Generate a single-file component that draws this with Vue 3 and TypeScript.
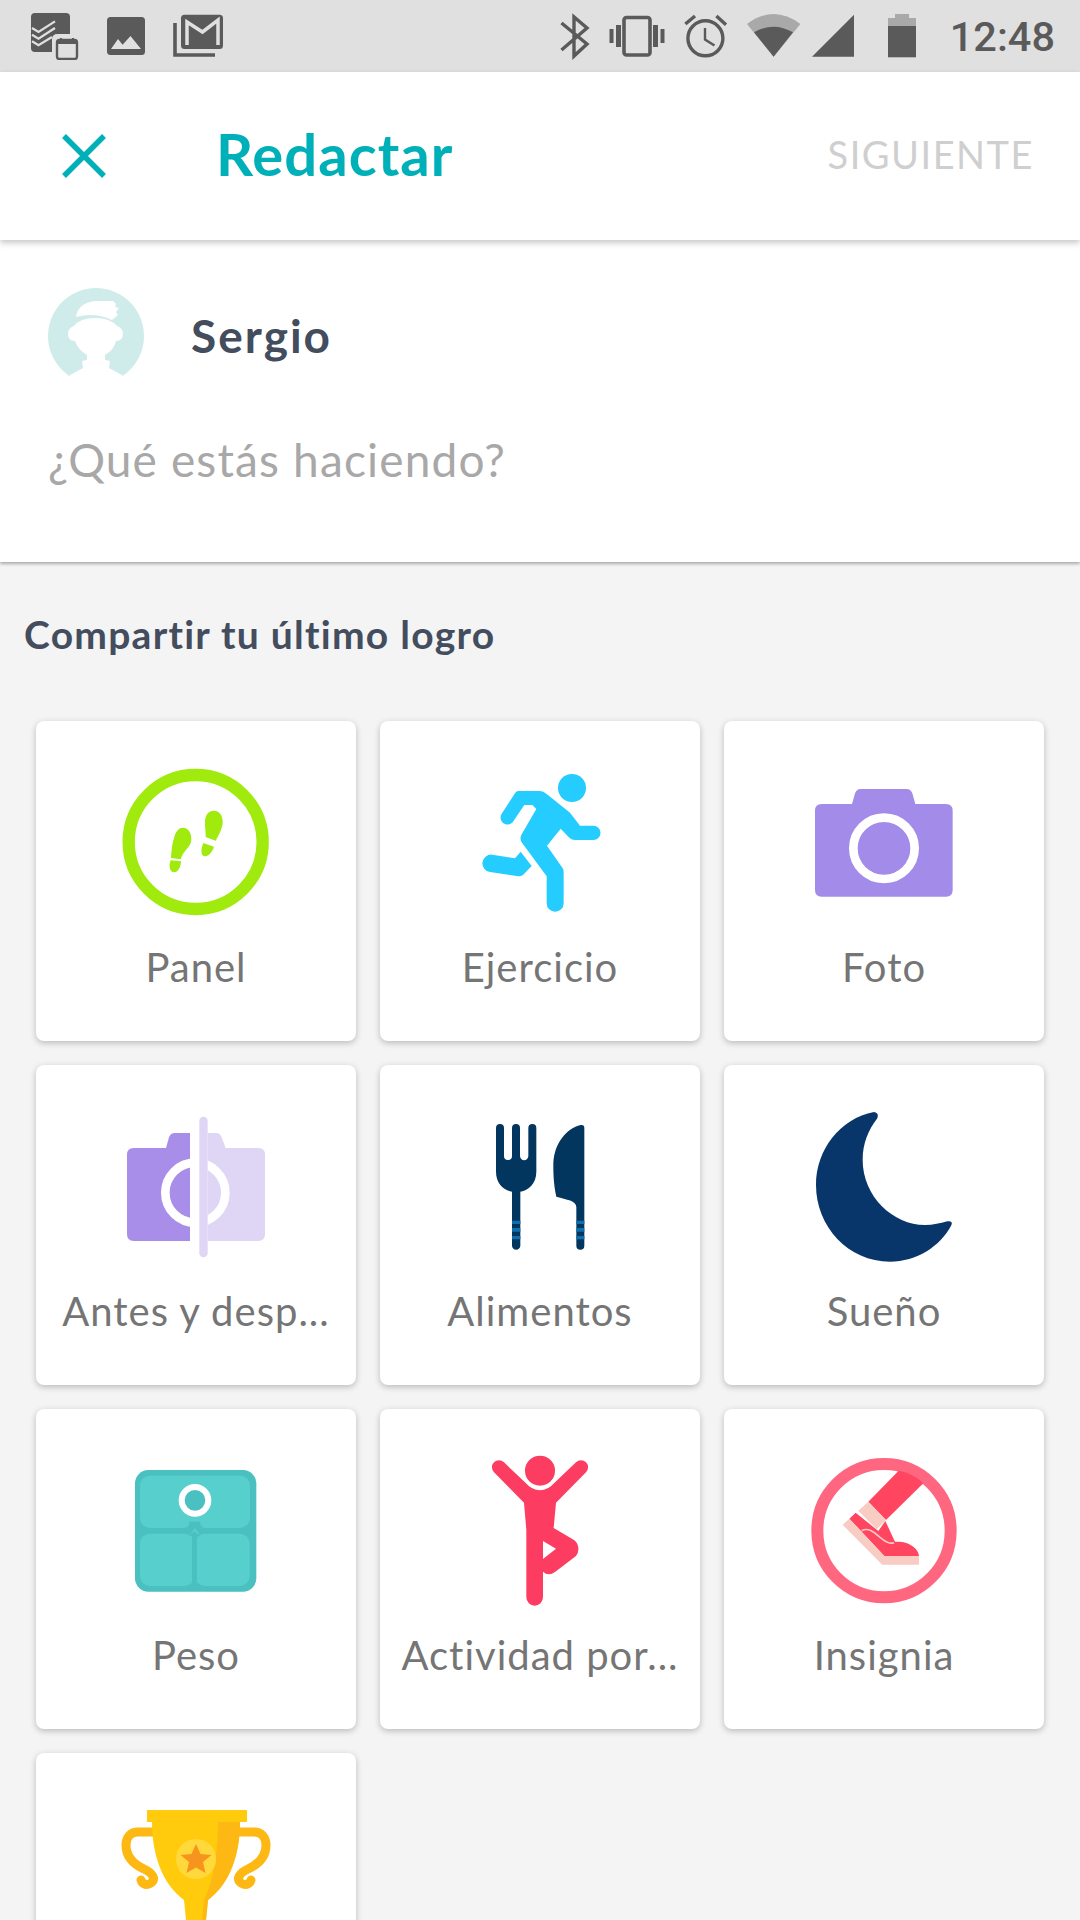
<template>
  <div class="screen">
    <!-- Status bar -->
    <div class="status-bar">
      <div class="status-group left">
        <svg class="st" width="50" height="48" viewBox="30 12 50 48">
          <rect x="31" y="13" width="39" height="39" rx="4" fill="#5a5a5a" />
          <path d="M32 28l6.500 4L55 21.300M32 34.700l6.500 4L55 28M32 41.300l6.500 4L52 37" fill="none" stroke="#e0e0e0" stroke-width="2.200" />
          <rect x="52" y="34" width="28" height="28" rx="5" fill="#e0e0e0" />
          <rect x="57" y="40" width="20" height="19" rx="2.500" fill="#e0e0e0" stroke="#5a5a5a" stroke-width="2.400" />
          <path d="M57 41h20v3H57z" fill="#5a5a5a" />
          <path d="M61 38v3M73 38v3" stroke="#5a5a5a" stroke-width="2" />
        </svg>
        <svg class="st" width="42" height="48" viewBox="105 12 42 48">
          <rect x="107" y="17" width="38" height="38" rx="3.500" fill="#5a5a5a" />
          <path d="M111 49l7-10 4.600 5.700 7.900-8.700L141 49z" fill="#e0e0e0" />
        </svg>
        <svg class="st" width="52" height="48" viewBox="172 12 52 48">
          <path d="M175 23v32h40" fill="none" stroke="#5a5a5a" stroke-width="3.600" />
          <rect x="181" y="14.700" width="42" height="34.300" rx="3.500" fill="#5a5a5a" />
          <path d="M187 45V22l15.500 10L218 20v25" fill="none" stroke="#e0e0e0" stroke-width="3.500" />
        </svg>
      </div>
      <div class="status-group right">
        <svg class="st" width="38" height="48" viewBox="559 12 38 48">
          <path d="M563.500 23L589 44l-13 12V17l13 11-25.500 22" fill="none" stroke="#5a5a5a" stroke-width="3.400" />
        </svg>
        <svg class="st" width="68" height="48" viewBox="605 12 68 48">
          <rect x="626" y="17.500" width="26" height="37.500" rx="2.500" fill="none" stroke="#5a5a5a" stroke-width="3.600" />
          <path d="M618 25h5v22h-5zM655 25h5v22h-5zM611.500 29h4v14h-4zM662.500 29h4v14h-4z" fill="#5a5a5a" />
        </svg>
        <svg class="st" width="54" height="48" viewBox="681 12 54 48">
          <circle cx="707.400" cy="38.300" r="17.500" fill="none" stroke="#5a5a5a" stroke-width="3.400" />
          <path d="M707 28v11.500l9.500 6" fill="none" stroke="#5a5a5a" stroke-width="2.400" />
          <path d="M687.400 24l9.600-8M718.400 16l9.600 8.700" stroke="#5a5a5a" stroke-width="3.400" />
        </svg>
        <svg class="st" width="63" height="48" viewBox="743 12 63 48">
          <path d="M775.600 56.700L749 24q26.600-20 53.400 0z" fill="#a9a9a9" />
          <path d="M775.600 56.700L756 32.300q19.600-11.300 39 0z" fill="#5a5a5a" />
        </svg>
        <svg class="st" width="44" height="48" viewBox="814 12 44 48">
          <path d="M814 56.700l42-42v42z" fill="#5a5a5a" />
        </svg>
        <svg class="st batt" width="44" height="48" viewBox="882 12 44 48">
          <path d="M897 14h14v4h7v8h-28v-8h7z" fill="#a9a9a9" />
          <rect x="890" y="26" width="28" height="31.300" fill="#5a5a5a" />
        </svg>
        <span class="clock">12:48</span>
      </div>
    </div>

    <!-- Toolbar -->
    <header class="toolbar">
      <svg class="close" width="44" height="44" viewBox="0 0 44 44">
        <path d="M2 2l40 40M42 2L2 42" fill="none" stroke="#00b0b9" stroke-width="5.500" />
      </svg>
      <h1 class="title">Redactar</h1>
      <span class="next">SIGUIENTE</span>
    </header>

    <!-- Composer -->
    <section class="composer">
      <div class="user">
        <svg class="avatar" width="96" height="96" viewBox="48 288 96 96">
          <circle cx="96" cy="336" r="48" fill="#d0ecea" />
          <path d="M76 317q2-14 19-16h18l3 3-1 3 4 1-3 4 2 3-6 5q-17-8-36-3z" fill="#fff" />
          <path d="M95 318q15 0 22 8 6 2 6 8 0 7-7 7-2 9-11 14v5l5 1-1 7 13 7 6 9H64l6-9 13-7-1-7 5-1v-5q-9-5-12-14-7 0-7-7 0-6 6-8 6-8 21-8z" fill="#fff" />
        </svg>
        <span class="name">Sergio</span>
      </div>
      <div class="placeholder">¿Qué estás haciendo?</div>
    </section>

    <!-- Share grid -->
    <section class="share">
      <h2 class="share-title">Compartir tu último logro</h2>
      <div class="grid">
        <div class="card">
          <svg class="icon" viewBox="258 141 480 480">
            <circle cx="497" cy="381" r="201" fill="none" stroke="#a0ea0e" stroke-width="37" />
            <path d="M552 287c18 0 28 18 26 38-2 20-13 37-21 52l-30-11c1-16-3-31-2-46 1-20 10-33 27-33zM520 384l32 11c-4 15-17 29-27 29-11 0-15-16-5-40zM459 338c17 0 26 17 25 37-2 23-24 30-32 58l-29-4c2-29 4-44 10-64 5-17 14-27 26-27zM422 436l31 3c-1 19-9 33-21 33s-17-17-10-36z" fill="#a0ea0e" />
          </svg>
          <span class="label">Panel</span>
        </div>
        <div class="card">
          <svg class="icon" viewBox="255 141 480 480">
            <circle cx="591" cy="219" r="42" fill="#25ccff" />
            <path d="M430 228h65q10 0 20 9l70 56 30 39h40a21 21 0 0 1 0 43h-55q-10 0-17-7l-26-27-41 51 46 66q4 5 4 12v95a25.500 25.500 0 0 1-51 0v-81l-73-99q-10-13-2-27l44-76-12-12h-24l-35 52a21 21 0 0 1-34-24l39-60q5-10 12-10z" fill="#25ccff" />
            <path d="M352 419l68 11 17-20 33 43-23 24q-7 8-17 7l-85-13a26 26 0 0 1 7-52z" fill="#25ccff" />
          </svg>
          <span class="label">Ejercicio</span>
        </div>
        <div class="card">
          <svg class="icon" viewBox="252 141 480 480">
            <path d="M396 267l9-32q5-13 17-13h138q12 0 17 13l9 32h92q20 0 20 20v238q0 20-20 20H305q-20 0-20-20V287q0-20 20-20z" fill="#a38ce9" />
            <circle cx="492" cy="400" r="92" fill="none" stroke="#fff" stroke-width="26" />
          </svg>
          <span class="label">Foto</span>
        </div>
        <div class="card">
          <svg class="icon" viewBox="48 18 480 480">
            <path d="M198 144l9-32q5-13 17-13h46v324H101q-20 0-20-20V164q0-20 20-20z" fill="#a88ee9" />
            <path d="M323 99h25q12 0 17 13l12 32h98q20 0 20 20v239q0 20-20 20H323z" fill="#dfd6f6" />
            <circle cx="286" cy="278" r="90" fill="none" stroke="#fff" stroke-width="26" />
            <path d="M271 90h27v340h-27z" fill="#fff" />
            <rect x="298" y="50" width="25" height="422" rx="12.500" fill="#dfd6f6" />
          </svg>
          <span class="label">Antes y desp...</span>
        </div>
        <div class="card">
          <svg class="icon" viewBox="30 18 480 480">
            <path d="M138 84a12 12 0 0 1 24 0v84a12 12 0 0 0 24 0V84a12 12 0 0 1 24 0v84a12.500 12.500 0 0 0 25 0V84a12 12 0 0 1 24 0v131c0 35-24 57-48 60v162a12.500 12.500 0 0 1-25 0V275c-26-5-48-25-48-60z" fill="#03365f" />
            <path d="M403 84v353a12 12 0 0 1-24 0V322c0-22-29-22-60-32-9-40-9-75-9-100 2-60 40-105 82-115q11-2 11 9z" fill="#03365f" />
            <path d="M186 362h25v10h-25zM186 384h25v11h-25zM186 408h25v10h-25zM379 362h24v10h-24zM379 384h24v11h-24zM379 408h24v10h-24z" fill="#0d6fae" />
          </svg>
          <span class="label">Alimentos</span>
        </div>
        <div class="card">
          <svg class="icon" viewBox="42 18 480 480">
            <path d="M252 36q16 2 10 19c-27 35-44 75-44 125 0 110 92 195 187 195 25 0 45-5 67-11q18-2 12 12c-34 64-104 109-184 109-125 0-222-105-222-230 0-105 72-200 174-219z" fill="#08366b" />
          </svg>
          <span class="label">Sueño</span>
        </div>
        <div class="card">
          <svg class="icon" viewBox="48 30 480 480">
            <rect x="105" y="90" width="364" height="365" rx="40" fill="#4bc0c0" />
            <rect x="120" y="107" width="330" height="157" rx="30" fill="#56cfcd" />
            <path d="M268 245q0 18-18 20v16h68v-16q-18-2-18-20z" fill="#4bc0c0" />
            <rect x="120" y="281" width="164" height="157" rx="30" fill="#56cfcd" />
            <rect x="285" y="281" width="164" height="157" rx="30" fill="#56cfcd" />
            <path d="M272 282l13-19 13 19z" fill="#56cfcd" />
            <path d="M276 438V284q0-9 7.500-9t7.500 9v154z" fill="#4bc0c0" />
            <circle cx="285" cy="181" r="40" fill="#4bc0c0" stroke="#fff" stroke-width="18" />
          </svg>
          <span class="label">Peso</span>
        </div>
        <div class="card">
          <svg class="icon" viewBox="30 30 480 480">
            <circle cx="270" cy="92" r="45" fill="#fd3c61" />
            <path fill-rule="evenodd" d="M162 67l66 63q17 20 42 21 25-1 42-21l66-63a21 21 0 0 1 30 30l-90 91-7 76 61 36a34 34 0 0 1 6 48l-62 47q-21 15-37 0v77a25 25 0 0 1-50 0V270l-7-82-90-91a21 21 0 0 1 30-30zM279 303v54l39-31z" fill="#fd3c61" />
          </svg>
          <span class="label">Actividad por...</span>
        </div>
        <div class="card">
          <svg class="icon" viewBox="42 30 480 480">
            <circle cx="282" cy="272" r="200" fill="none" stroke="#ff6680" stroke-width="36" />
            <path d="M235 185l91-93q44 8 74 38L288 240z" fill="#ff4560" />
            <path d="M235 185l53 55-28 28-55-56z" fill="#f8cbc3" />
            <path d="M178 236l19-18 68 55 21-30 29 62h15c30 3 55 20 57 43H283z" fill="#ff4560" />
            <path d="M158 254l20-18 105 112h104v26H277z" fill="#f8cbc3" />
            <path d="M215 272c20-10 35 3 55 20 20 16 30 20 42 16" fill="none" stroke="#f8cbc3" stroke-width="5" />
          </svg>
          <span class="label">Insignia</span>
        </div>
        <div class="card">
          <svg class="icon" viewBox="116 1794 160 160">
            <path d="M158 1832h-20c-8 0-12 6-12 13 0 11 7 19 18 24 9 4 12 10 7 14-4 3-9 1-10-3M234 1832h20c8 0 12 6 12 13 0 11-7 19-18 24-9 4-12 10-7 14 4 3 9 1 10-3" fill="none" stroke="#fdb813" stroke-width="9" stroke-linecap="round" />
            <path d="M147 1810h100v12h-7c0 32-10 62-32 78l-2 20h-20l-2-20c-22-16-32-46-32-78h-5z" fill="#ffcb0c" />
            <path d="M218 1822h22c0 32-10 62-32 78l-2 20h-4l2-20c10-20 14-50 14-78z" fill="#fdb813" />
            <circle cx="196" cy="1859" r="20" fill="#ffd93b" />
            <path d="M196 1844l4.500 10 11 1-8.500 7 2.500 11-9.500-5.500-9.500 5.500 2.500-11-8.500-7 11-1z" fill="#f7941d" />
          </svg>
        </div>
      </div>
    </section>
  </div>
</template>

<script setup lang="ts">
</script>

<style>
html,
body {
  margin: 0;
  background: #f4f4f4;
}
</style>

<style scoped>
.screen {
  width: 1080px;
  height: 1920px;
  overflow: hidden;
  background: #f4f4f4;
  font-family: Lato, "Open Sans", sans-serif;
}

.status-bar {
  height: 72px;
  background: #e0e0e0;
  display: flex;
  justify-content: space-between;
  align-items: center;
  padding: 0 25px 0 30px;
}

.status-group {
  display: flex;
  align-items: center;
}

.status-group.left {
  gap: 25px;
}

.status-group.right {
  gap: 8px;
}

.st {
  display: block;
}

.batt {
  margin: 0 18px 0 16px;
}

.clock {
  font-family: Roboto, sans-serif;
  font-weight: 500;
  font-size: 41.5px;
  color: #5a5a5a;
}

.toolbar {
  position: relative;
  z-index: 2;
  height: 168px;
  background: #fff;
  display: flex;
  align-items: center;
  padding: 0 46px 0 62px;
  box-shadow: 0 3px 6px rgba(0, 0, 0, 0.22);
}

.close {
  display: block;
}

.title {
  margin: 0 0 5px 110px;
  font-size: 58px;
  font-weight: 700;
  letter-spacing: 1px;
  color: #00b0b9;
}

.next {
  margin: 0 0 5px auto;
  font-size: 38px;
  letter-spacing: 1.5px;
  color: #cfcfcf;
}

.composer {
  position: relative;
  z-index: 1;
  height: 322px;
  box-sizing: border-box;
  background: #fff;
  padding: 48px 48px 0;
  box-shadow: 0 2px 3px rgba(0, 0, 0, 0.3);
}

.user {
  display: flex;
  align-items: center;
  gap: 47px;
}

.avatar {
  display: block;
}

.name {
  margin-bottom: 2px;
  font-size: 46px;
  font-weight: 700;
  letter-spacing: 2px;
  color: #434d5d;
}

.placeholder {
  margin-top: 48px;
  font-size: 46px;
  letter-spacing: 1.15px;
  color: #a8a8a8;
}

.share-title {
  margin: 0;
  padding: 49px 0 0 24px;
  font-size: 39px;
  font-weight: 700;
  letter-spacing: 1.25px;
  color: #434d5d;
}

.grid {
  display: grid;
  grid-template-columns: repeat(3, 320px);
  gap: 24px;
  padding: 64px 36px 0;
}

.card {
  height: 320px;
  box-sizing: border-box;
  background: #fff;
  border-radius: 8px;
  box-shadow: 0 2px 6px rgba(0, 0, 0, 0.24);
  padding: 41px 0 0;
  display: flex;
  flex-direction: column;
  align-items: center;
}

.icon {
  display: block;
  width: 160px;
  height: 160px;
  flex: none;
}

.label {
  margin-top: 21px;
  font-size: 40px;
  letter-spacing: 1px;
  color: #757575;
  white-space: nowrap;
}
</style>
